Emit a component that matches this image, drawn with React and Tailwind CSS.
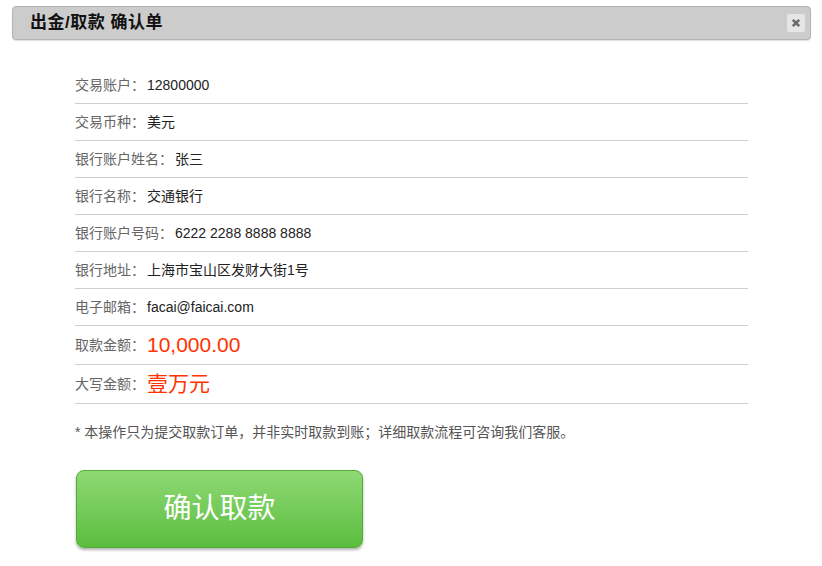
import React from "react";

const rows = [
  { label: "交易账户：", value: "12800000" },
  { label: "交易币种：", value: "美元" },
  { label: "银行账户姓名：", value: "张三" },
  { label: "银行名称：", value: "交通银行" },
  { label: "银行账户号码：", value: "6222 2288 8888 8888" },
  { label: "银行地址：", value: "上海市宝山区发财大街1号" },
  { label: "电子邮箱：", value: "facai@faicai.com" },
];

const font = { fontFamily: '"Liberation Sans", Arial, "Noto Sans CJK SC", sans-serif' };

const App = () => {
  return (
    <div className="min-h-[566px] w-[822px] bg-white pt-[6px]" style={font}>
      <div className="mx-[12px] flex h-[34px] w-[799px] items-center justify-between rounded-[4px] border border-[#b4b4b4] bg-[#cccccc] pl-[17px] pr-[5px] shadow-[0_1px_1px_rgba(0,0,0,0.12)]">
        <h1 className="text-[17px] font-bold tracking-[0.5px] text-[#111]">出金/取款 确认单</h1>
        <button
          type="button"
          className="flex h-[18px] w-[18px] items-center justify-center rounded-[2px] bg-[#e6e6e6]"
        >
          <svg width="10" height="10" viewBox="0 0 10 10">
            <path d="M1.8 1.8 L8.2 8.2 M8.2 1.8 L1.8 8.2" stroke="#6a6a6a" strokeWidth="2.6" />
          </svg>
        </button>
      </div>

      <main className="ml-[75px] mt-[27px] w-[673px]">
        <ul>
          {rows.map((row) => (
            <li
              key={row.label}
              className="flex h-[37px] items-center border-b border-[#cfcfcf] text-[14px]"
            >
              <span className="text-[#666]">{row.label}</span>
              <span className="ml-[2px] text-[#222]">{row.value}</span>
            </li>
          ))}
          <li className="flex h-[39px] items-center border-b border-[#cfcfcf] text-[14px]">
            <span className="text-[#666]">取款金额：</span>
            <span className="ml-[2px] text-[21px] text-[#ff3300]">10,000.00</span>
          </li>
          <li className="flex h-[39px] items-center border-b border-[#cfcfcf] text-[14px]">
            <span className="text-[#666]">大写金额：</span>
            <span className="ml-[2px] text-[21px] text-[#ff3300]">壹万元</span>
          </li>
        </ul>

        <p className="mt-[18px] text-[14px] leading-[20px] text-[#555]">
          * 本操作只为提交取款订单，并非实时取款到账；详细取款流程可咨询我们客服。
        </p>

        <button
          type="button"
          className="mt-[28px] ml-[1px] flex h-[78px] w-[287px] items-center justify-center rounded-[8px] border border-[#52ad38] bg-gradient-to-b from-[#8ed973] to-[#5bbd3e] text-[28px] text-white shadow-[0_2px_3px_rgba(0,0,0,0.3)]"
        >
          确认取款
        </button>
      </main>
    </div>
  );
};

export default App;
